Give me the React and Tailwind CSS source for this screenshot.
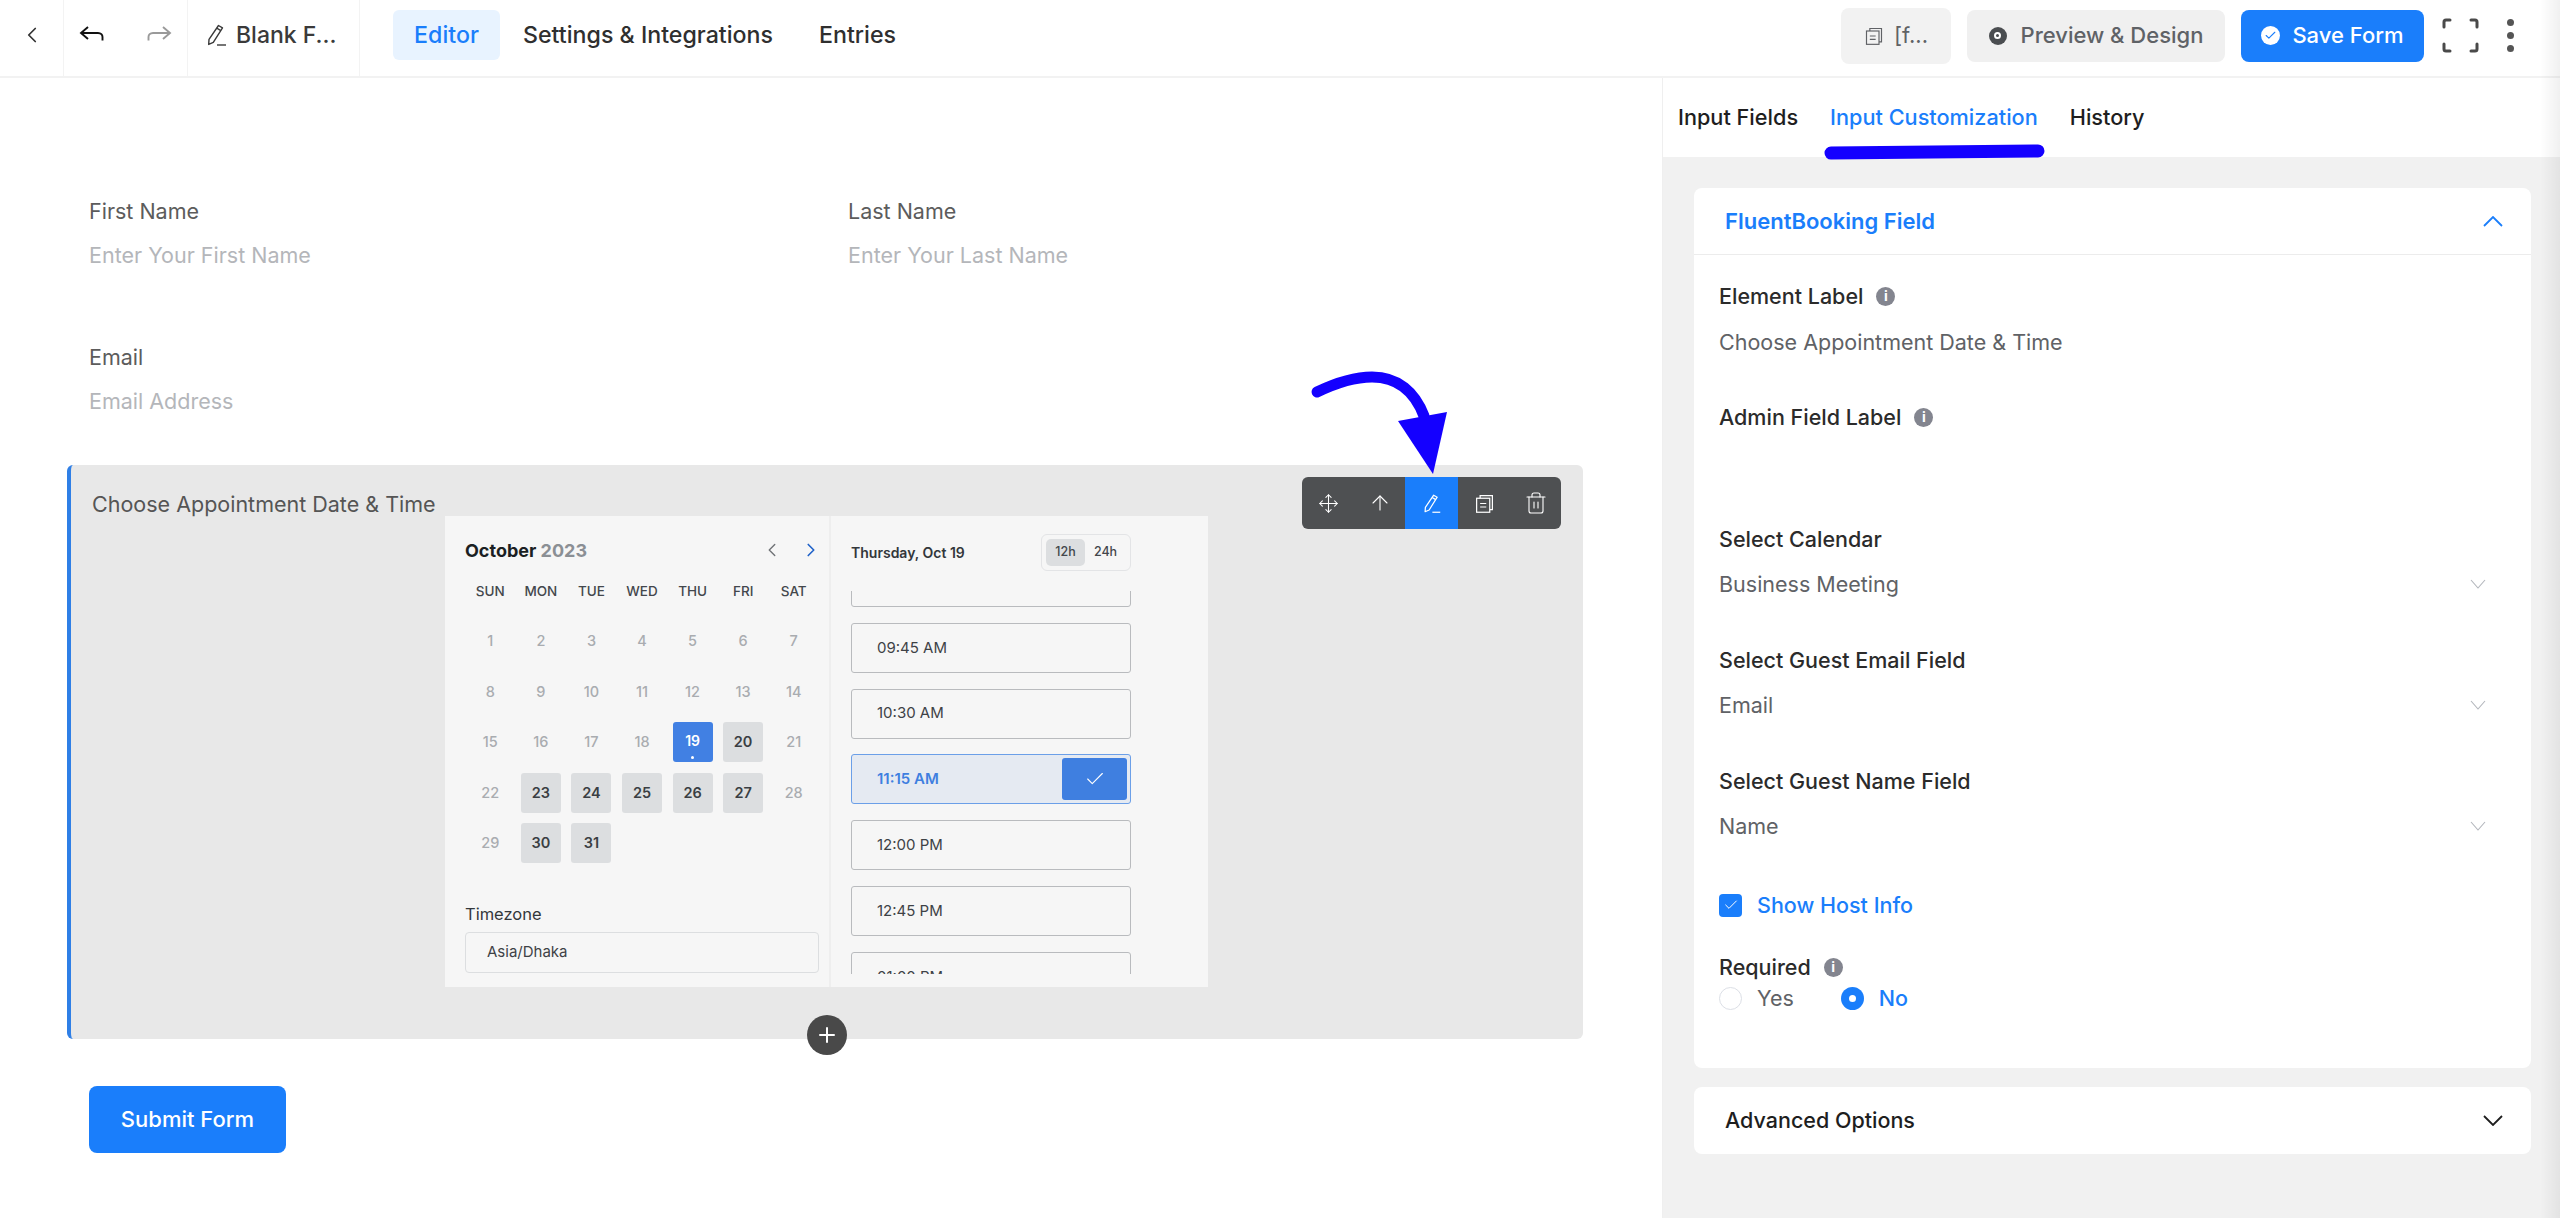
import React from "react";
import { ChevronLeft, ChevronRight, Check, Plus, ArrowUp, Move, Trash2 } from "lucide-react";

const days = [
  [1, 2, 3, 4, 5, 6, 7],
  [8, 9, 10, 11, 12, 13, 14],
  [15, 16, 17, 18, 19, 20, 21],
  [22, 23, 24, 25, 26, 27, 28],
  [29, 30, 31],
];
const available = [20, 23, 24, 25, 26, 27, 30, 31];
const weekdays = ["SUN", "MON", "TUE", "WED", "THU", "FRI", "SAT"];
const slots = ["", "09:45 AM", "10:30 AM", "11:15 AM", "12:00 PM", "12:45 PM", "01:00 PM"];

const PencilIcon = ({ className }) => (
  <svg viewBox="0 0 24 24" fill="none" stroke="currentColor" strokeWidth="1.4" strokeLinejoin="round" className={className}>
    <path d="M14.5 2.5l4 2.3-9.2 14.6-4.6 2 .3-5z" />
    <path d="M12.8 5.2l4 2.4" />
    <path d="M13 22h9" />
  </svg>
);

const CopyIcon = ({ className }) => (
  <svg viewBox="0 0 24 24" fill="none" stroke="currentColor" strokeWidth="1.4" className={className}>
    <path d="M7 6V3h14v16h-3" />
    <rect x="3" y="6" width="15" height="16" />
    <path d="M7 12h7M7 16h7" />
  </svg>
);

const Chevron = ({ up, className }) => (
  <svg viewBox="0 0 20 11" fill="none" stroke="currentColor" strokeWidth="1.8" className={className}>
    <path d={up ? "M1 10l9-9 9 9" : "M1 1l9 9 9-9"} />
  </svg>
);

const InfoIcon = () => (
  <span className="flex h-[19px] w-[19px] items-center justify-center rounded-full bg-[#83858f] text-[14px] font-bold leading-none text-white">
    i
  </span>
);

const FieldLabel = ({ children, info, className = "" }) => (
  <div className={`flex h-[28px] items-center gap-[13px] text-[21.5px] font-medium text-[#2b2b2b] ${className}`}>
    {children}
    {info && <InfoIcon />}
  </div>
);

const SelectValue = ({ children, className = "" }) => (
  <div className={`flex h-[28px] items-center justify-between pr-[20px] text-[21.5px] text-[#606266] ${className}`}>
    {children}
    <svg viewBox="0 0 16 10" fill="none" stroke="#b3b6bc" strokeWidth="1.1" className="h-[10px] w-[16px]">
      <path d="M1 1l7 8 7-8" />
    </svg>
  </div>
);

const FormField = ({ label, placeholder }) => (
  <div>
    <div className="h-[28px] text-[21.5px] leading-[28px] text-[#5c5c5c]">{label}</div>
    <div className="mt-[16px] h-[28px] text-[21.5px] leading-[28px] text-[#b4b6ba]">{placeholder}</div>
  </div>
);

const Calendar = () => (
  <div className="ml-[374px] flex h-[471px] w-[763px] bg-[#f6f6f6]">
    <div className="w-[386px] border-r-2 border-[#eeeeee] pl-[20px] pt-[22px]">
      <div className="flex h-[24px] w-[354px] items-center justify-between">
        <div className="text-[18px] font-bold text-[#1b1f23]">
          October <span className="text-[#8b8f94]">2023</span>
        </div>
        <div className="-mr-[3px] flex items-center gap-[17px]">
          <ChevronLeft size={22} strokeWidth={1.5} className="text-[#6f7276]" />
          <ChevronRight size={22} strokeWidth={1.8} className="text-[#1f62c9]" />
        </div>
      </div>
      <div className="mt-[19px] grid h-[20px] w-[354px] grid-cols-7 text-center text-[13.5px] font-medium leading-[20px] text-[#43474c]">
        {weekdays.map((d) => (
          <div key={d}>{d}</div>
        ))}
      </div>
      <div className="mt-[15px] grid w-[354px] grid-cols-7 auto-rows-[50.5px]">
        {days.flat().map((d) => (
          <div key={d} className="flex items-center justify-center">
            {d === 19 ? (
              <div className="relative flex h-[40px] w-[40px] items-center justify-center rounded-[3px] bg-[#4180e3] pb-[4px] text-[14px] font-semibold text-white">
                19
                <span className="absolute bottom-[3px] h-[3px] w-[3px] rounded-full bg-white" />
              </div>
            ) : available.includes(d) ? (
              <div className="flex h-[40px] w-[40px] items-center justify-center rounded-[3px] bg-[#dcdee0] text-[14.5px] font-semibold text-[#3a3e43]">
                {d}
              </div>
            ) : (
              <span className="text-[14.5px] font-medium text-[#a9acb0]">{d}</span>
            )}
          </div>
        ))}
      </div>
      <div className="mt-[35px] h-[20px] text-[16.5px] leading-[20px] text-[#33373b]">Timezone</div>
      <div className="mt-[8px] flex h-[41px] w-[354px] items-center rounded-[4px] border border-[#dcdee0] pl-[21px] text-[15px] text-[#3e4246]">
        Asia/Dhaka
      </div>
    </div>
    <div className="pl-[20px] pt-[18px]">
      <div className="flex h-[37px] w-[280px] items-center justify-between">
        <div className="text-[14px] font-semibold text-[#33373b]">Thursday, Oct 19</div>
        <div className="flex h-[37px] w-[90px] items-center rounded-[6px] border border-[#e3e4e6] px-[4px] text-[12.5px] font-medium text-[#43474c]">
          <span className="flex h-[27px] w-[39px] items-center justify-center rounded-[5px] bg-[#dcdee0]">12h</span>
          <span className="flex h-[27px] flex-1 items-center justify-center">24h</span>
        </div>
      </div>
      <div className="mt-[20px] h-[383px] w-[280px] overflow-hidden">
        <div className="-mt-[34px] flex flex-col gap-[15.8px]">
          {slots.map((s) =>
            s === "11:15 AM" ? (
              <div key={s} className="flex h-[50px] shrink-0 items-center justify-between rounded-[3px] border border-[#6b9fe8] bg-[#e5eaf2] pl-[25px] pr-[3px] text-[15px] font-semibold text-[#3f7fe0]">
                {s}
                <span className="flex h-[42px] w-[65px] items-center justify-center rounded-[3px] bg-[#3f7fe0]">
                  <Check size={22} strokeWidth={1.2} className="text-white" />
                </span>
              </div>
            ) : (
              <div key={s} className="flex h-[50px] shrink-0 items-center rounded-[3px] border border-[#b9bbbe] pl-[25px] text-[15px] text-[#3e4246]">
                {s}
              </div>
            )
          )}
        </div>
      </div>
    </div>
  </div>
);

const Toolbar = () => (
  <div className="absolute right-[22px] top-[12px] flex h-[52px] w-[259px] overflow-hidden rounded-[6px] bg-[#4e5052] text-white">
    <div className="flex w-[52px] items-center justify-center">
      <Move size={21} strokeWidth={1.2} />
    </div>
    <div className="flex w-[51px] items-center justify-center">
      <ArrowUp size={24} strokeWidth={1.1} />
    </div>
    <div className="flex w-[53px] items-center justify-center bg-[#1a7efb]">
      <PencilIcon className="h-[21px] w-[21px]" />
    </div>
    <div className="flex w-[52px] items-center justify-center">
      <CopyIcon className="h-[21px] w-[21px]" />
    </div>
    <div className="flex w-[51px] items-center justify-center">
      <Trash2 size={24} strokeWidth={1.1} />
    </div>
  </div>
);

export default function App() {
  return (
    <div className="relative h-screen w-full overflow-hidden bg-white font-['Inter',sans-serif]">
      {/* top bar */}
      <header className="flex h-[78px] items-center border-b-2 border-[#f2f2f2]">
        <div className="flex h-full w-[64px] items-center justify-center border-r border-[#f3f3f3] pb-[6px]">
          <ChevronLeft size={26} strokeWidth={1.6} className="text-[#333]" />
        </div>
        <div className="flex h-full w-[124px] items-center gap-[41px] border-r border-[#f3f3f3] pb-[6px] pl-[15px]">
          <svg viewBox="0 0 26 20" fill="none" stroke="#111" strokeWidth="1.9" className="h-[20px] w-[26px]">
            <path d="M9 2L2 8l7 6" />
            <path d="M2 8h17c3 0 4.500 2 4.500 4v3.500" />
          </svg>
          <svg viewBox="0 0 26 20" fill="none" stroke="#9a9a9a" strokeWidth="1.9" className="h-[20px] w-[26px]">
            <path d="M17 2l7 6-7 6" />
            <path d="M24 8H7c-3 0-4.500 2-4.500 4v3.500" />
          </svg>
        </div>
        <div className="flex h-full w-[172px] items-center gap-[8px] border-r border-[#f3f3f3] pb-[6px] pl-[16px] text-[23px] font-medium text-[#3a3a3a]">
          <PencilIcon className="h-[24px] w-[24px]" />
          Blank F...
        </div>
        <nav className="mb-[6px] ml-[33px] flex items-center text-[23.2px] font-medium text-[#2f2f2f]">
          <div className="flex h-[50px] w-[107px] items-center justify-center rounded-[6px] bg-[#e8f3ff] text-[#1a7efb]">Editor</div>
          <div className="ml-[23px]">Settings &amp; Integrations</div>
          <div className="ml-[46px]">Entries</div>
        </nav>
        <div className="mb-[5px] ml-auto flex items-center pr-[46px]">
          <div className="flex h-[56px] w-[110px] items-center justify-center gap-[10px] rounded-[8px] bg-[#f2f2f2] text-[22px] text-[#606266]">
            <CopyIcon className="h-[20px] w-[20px]" />
            [f...
          </div>
          <div className="ml-[16px] flex h-[52px] w-[258px] items-center justify-center gap-[14px] rounded-[8px] bg-[#f0f0f0] text-[22px] font-medium text-[#5f6266]">
            <span className="flex h-[18px] w-[18px] items-center justify-center rounded-full bg-[#4a4d50]">
              <span className="h-[7px] w-[7px] rounded-full border-2 border-white" />
            </span>
            Preview &amp; Design
          </div>
          <div className="ml-[16px] flex h-[52px] w-[183px] items-center justify-center gap-[12px] rounded-[8px] bg-[#1a7efb] text-[22px] font-medium text-white">
            <span className="flex h-[19px] w-[19px] items-center justify-center rounded-full bg-white">
              <Check size={13} strokeWidth={2} className="text-[#1a7efb]" />
            </span>
            Save Form
          </div>
          <svg viewBox="0 0 37 35" fill="none" stroke="#4a4a4a" strokeWidth="3" strokeLinecap="round" className="ml-[18px] h-[35px] w-[37px]">
            <path d="M2 9V4q0-2 2-2h4M29 2h4q2 0 2 2v5M35 26v5q0 2-2 2h-4M8 33H4q-2 0-2-2v-5" />
          </svg>
          <div className="ml-[28px] flex flex-col gap-[6px]">
            <span className="h-[7px] w-[7px] rounded-full bg-[#555]" />
            <span className="h-[7px] w-[7px] rounded-full bg-[#555]" />
            <span className="h-[7px] w-[7px] rounded-full bg-[#555]" />
          </div>
        </div>
      </header>

      <div className="flex h-[1140px]">
        {/* form canvas */}
        <main className="w-[1662px] pt-[119px]">
          <div className="ml-[67px] w-[1516px]">
            <div className="grid grid-cols-[759px_1fr] px-[22px]">
              <FormField label="First Name" placeholder="Enter Your First Name" />
              <FormField label="Last Name" placeholder="Enter Your Last Name" />
            </div>
            <div className="mt-[74px] px-[22px]">
              <FormField label="Email" placeholder="Email Address" />
            </div>
            <div className="relative mt-[50px] h-[574px] rounded-[6px] border-l-4 border-[#2f7fe6] bg-[#e8e8e8] pt-[25px]">
              <div className="h-[26px] pl-[21px] text-[21.5px] leading-[28px] text-[#555]">Choose Appointment Date &amp; Time</div>
              <Calendar />
              <Toolbar />
              <div className="absolute -bottom-[16px] left-[736px] flex h-[40px] w-[40px] items-center justify-center rounded-full bg-[#494949] text-white">
                <Plus size={24} strokeWidth={2} />
              </div>
            </div>
            <div className="ml-[22px] mt-[47px] flex h-[67px] w-[197px] items-center justify-center rounded-[8px] bg-[#1a7efb] text-[22px] font-medium text-white">
              Submit Form
            </div>
          </div>
        </main>

        {/* right panel */}
        <aside className="flex w-[898px] flex-col border-l border-[#efefef]">
          <div className="flex h-[79px] items-center gap-[32px] bg-white pl-[15px] text-[21.7px] font-medium text-[#1e1e1e]">
            <span>Input Fields</span>
            <span className="text-[#1a7efb]">Input Customization</span>
            <span>History</span>
          </div>
          <div className="flex-1 bg-[#f1f1f1] pl-[31px] pt-[31px]">
            <div className="w-[837px] rounded-[8px] bg-white">
              <div className="flex h-[67px] items-center justify-between border-b border-[#ececec] pl-[31px] pr-[28px] text-[22px] font-semibold text-[#1a7efb]">
                FluentBooking Field
                <Chevron up className="h-[11px] w-[20px]" />
              </div>
              <div className="h-[813px] px-[25px] pt-[27px]">
                <FieldLabel info>Element Label</FieldLabel>
                <div className="mt-[18px] h-[28px] text-[21.5px] leading-[28px] text-[#606266]">Choose Appointment Date &amp; Time</div>
                <FieldLabel info className="mt-[47px]">Admin Field Label</FieldLabel>
                <FieldLabel className="mt-[94px]">Select Calendar</FieldLabel>
                <SelectValue className="mt-[17px]">Business Meeting</SelectValue>
                <FieldLabel className="mt-[48px]">Select Guest Email Field</FieldLabel>
                <SelectValue className="mt-[17px]">Email</SelectValue>
                <FieldLabel className="mt-[48px]">Select Guest Name Field</FieldLabel>
                <SelectValue className="mt-[17px]">Name</SelectValue>
                <div className="mt-[51px] flex h-[28px] items-center gap-[15px] text-[21.5px] font-medium text-[#1a7efb]">
                  <span className="flex h-[23px] w-[23px] items-center justify-center rounded-[4px] bg-[#1a7efb]">
                    <Check size={16} strokeWidth={1.5} className="text-white" />
                  </span>
                  Show Host Info
                </div>
                <FieldLabel info className="mt-[34px]">Required</FieldLabel>
                <div className="mt-[3px] flex h-[28px] items-center text-[21.5px]">
                  <span className="h-[23px] w-[23px] rounded-full border border-[#dcdfe6]" />
                  <span className="ml-[15px] text-[#606266]">Yes</span>
                  <span className="ml-[47px] flex h-[23px] w-[23px] items-center justify-center rounded-full bg-[#1a7efb]">
                    <span className="h-[7px] w-[7px] rounded-full bg-white" />
                  </span>
                  <span className="ml-[15px] font-medium text-[#1a7efb]">No</span>
                </div>
              </div>
            </div>
            <div className="mt-[19px] flex h-[67px] w-[837px] items-center justify-between rounded-[8px] bg-white pl-[31px] pr-[28px] text-[21.5px] font-medium text-[#1e1e1e]">
              Advanced Options
              <Chevron className="h-[11px] w-[20px]" />
            </div>
          </div>
        </aside>
      </div>

      {/* edge shading of the capture */}
      <div className="pointer-events-none absolute right-0 top-0 h-full w-[20px] bg-linear-to-r from-transparent to-[#0000000f]" />

      {/* hand drawn annotations on the screenshot */}
      <svg className="pointer-events-none absolute left-0 top-0 h-[1218px] w-[2560px]" viewBox="0 0 2560 1218" fill="none">
        <path d="M1831 153L2038 151" stroke="#1400ff" strokeWidth="13" strokeLinecap="round" />
        <path d="M1317 392C1340 381 1358 377 1372 377C1398 377 1415 392 1424 416" stroke="#1400ff" strokeWidth="11" strokeLinecap="round" />
        <path d="M1398 421L1447 412L1433 474Z" fill="#1400ff" />
      </svg>
    </div>
  );
}
